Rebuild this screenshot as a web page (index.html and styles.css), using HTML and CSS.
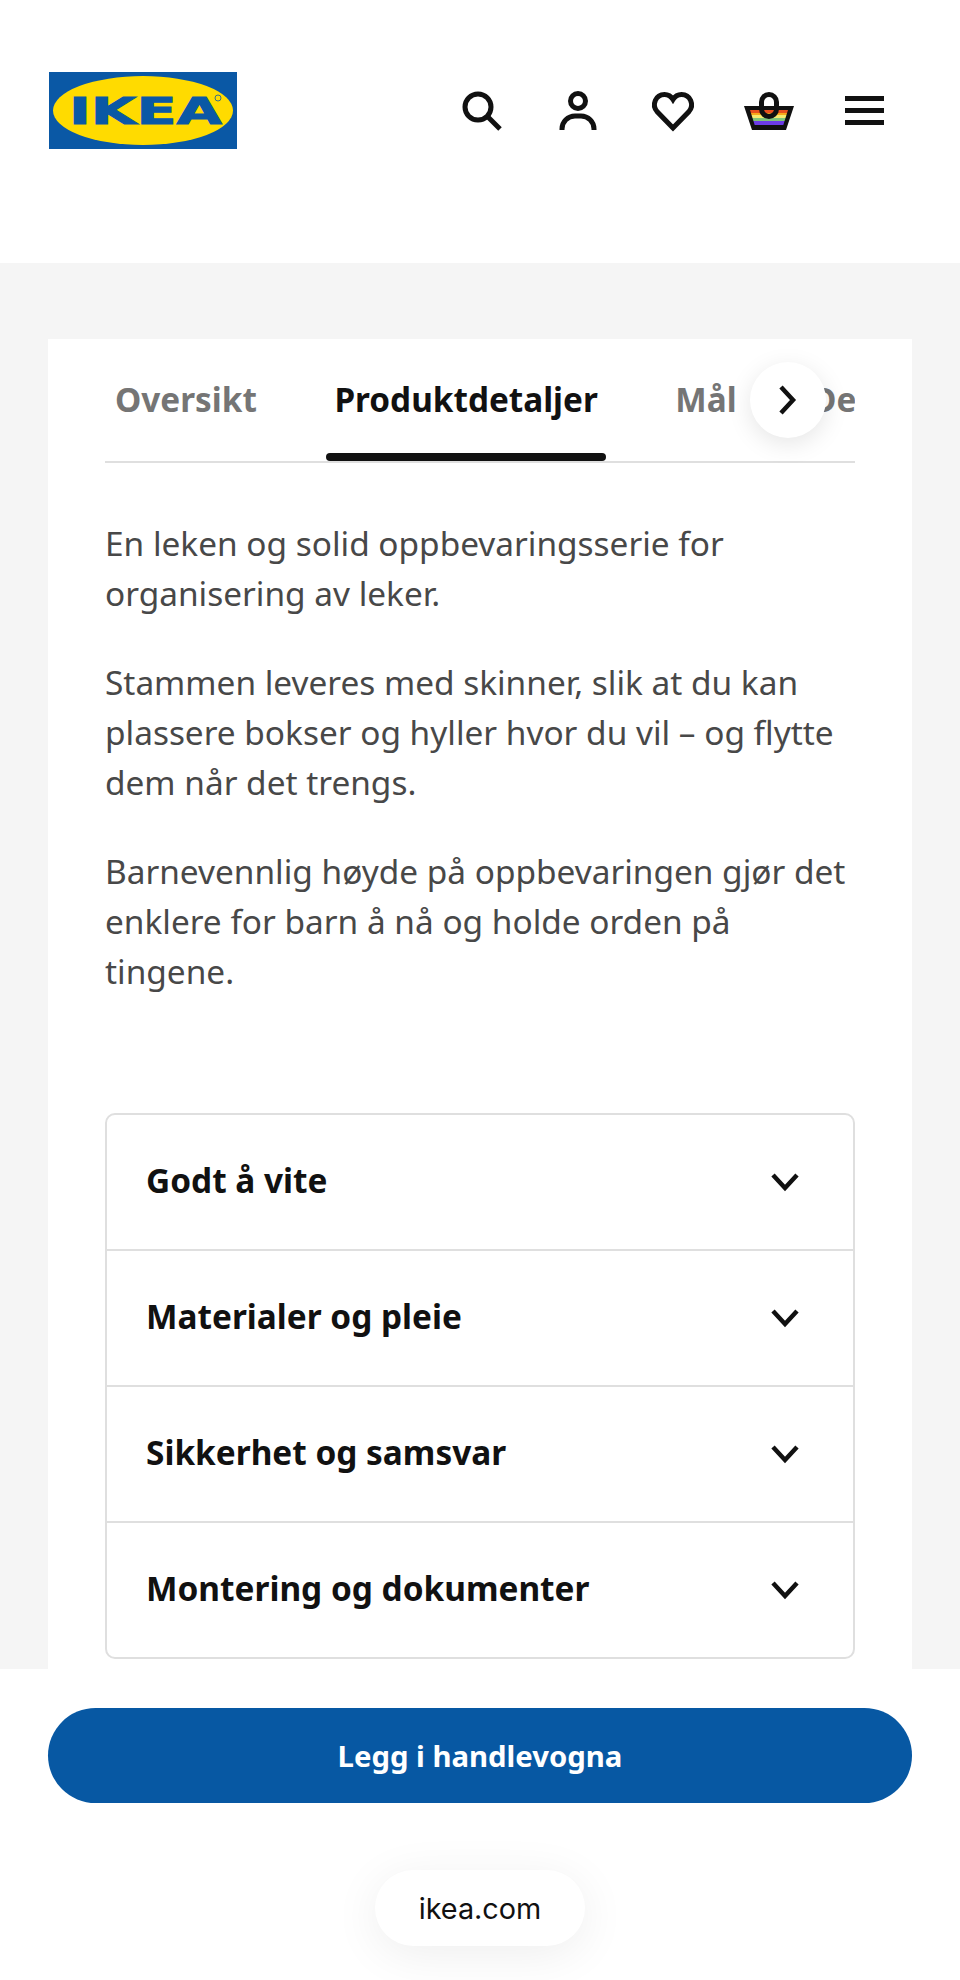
FILE: index.html
```html
<!DOCTYPE html>
<html lang="en">
<head>
    <meta charset="UTF-8">
    <meta name="viewport" content="width=device-width, initial-scale=1.0">
    <title>IKEA</title>
    <link rel="stylesheet" href="styles.css">
</head>
<body>
    <header class="site-header">
        <svg class="logo" viewBox="0 0 188 77" width="188" height="77">
            <rect width="188" height="77" fill="#0a58a5"/>
            <ellipse cx="94" cy="38.5" rx="90" ry="34.5" fill="#ffdb00"/>
            <text class="logo-text" x="20" y="52" textLength="153" lengthAdjust="spacingAndGlyphs">IKEA</text>
            <circle cx="169" cy="26" r="3" fill="none" stroke="#0a58a5" stroke-width="0.8"/>
        </svg>
        <nav class="icons">
            <span class="icon-btn">
                <svg viewBox="0 0 48 48" width="48" height="48" fill="none" stroke="#111" stroke-width="5">
                    <circle cx="20" cy="20" r="13"/>
                    <path d="M29.5 29.5L42 42"/>
                </svg>
            </span>
            <span class="icon-btn">
                <svg viewBox="0 0 48 48" width="48" height="48" fill="none" stroke="#111" stroke-width="5">
                    <circle cx="24" cy="14" r="7.5"/>
                    <path d="M8 43v-1a13 13 0 0 1 13-13h6a13 13 0 0 1 13 13v1"/>
                </svg>
            </span>
            <span class="icon-btn">
                <svg viewBox="0 0 48 48" width="48" height="48" fill="none" stroke="#111" stroke-width="5">
                    <path d="M24 41L8 24.500C2.500 18 6.500 7.500 15.500 7.500C20 7.500 22.500 10 24 12.500C25.500 10 28 7.500 32.500 7.500C41.500 7.500 45.500 18 40 24.500Z"/>
                </svg>
            </span>
            <span class="icon-btn">
                <svg class="basket" viewBox="0 0 48 48" width="48" height="48">
                    <defs>
                        <clipPath id="basket-inner"><path d="M5 23H43L38 39H10Z"/></clipPath>
                    </defs>
                    <path d="M-1 19H49L41 43H7Z" fill="#111"/>
                    <g clip-path="url(#basket-inner)">
                        <rect x="0" y="23" width="48" height="3" fill="#e8501e"/>
                        <rect x="0" y="26" width="48" height="2" fill="#f9a81a"/>
                        <rect x="0" y="28" width="48" height="3" fill="#f6ea6e"/>
                        <rect x="0" y="31" width="48" height="3" fill="#7fc47a"/>
                        <rect x="0" y="34" width="48" height="4" fill="#6c3ce8"/>
                    </g>
                    <rect x="16.500" y="7.500" width="15" height="22" rx="7.500" fill="none" stroke="#111" stroke-width="5"/>
                </svg>
            </span>
            <span class="icon-btn">
                <svg viewBox="0 0 48 48" width="48" height="48" fill="#111">
                    <rect x="5" y="9" width="39" height="5"/>
                    <rect x="5" y="21" width="39" height="5"/>
                    <rect x="5" y="33" width="39" height="5"/>
                </svg>
            </span>
        </nav>
    </header>

    <main class="content">
        <section class="card">
            <div class="tabs-wrap">
                <div class="tabs">
                    <span class="tab">Oversikt</span>
                    <span class="tab tab-active">Produktdetaljer</span>
                    <span class="tab">Mål</span>
                    <span class="tab tab-last">De</span>
                </div>
                <span class="tabs-next">
                    <svg viewBox="0 0 24 32" width="24" height="32" fill="none" stroke="#111" stroke-width="4.500">
                        <path d="M5 3L17 16L5 29"/>
                    </svg>
                </span>
            </div>

            <div class="description">
                <p>En leken og solid oppbevaringsserie for organisering av leker.</p>
                <p>Stammen leveres med skinner, slik at du kan plassere bokser og hyller hvor du vil – og flytte dem når det trengs.</p>
                <p>Barnevennlig høyde på oppbevaringen gjør det enklere for barn å nå og holde orden på tingene.</p>
            </div>

            <div class="accordion">
                <div class="accordion-row">
                    <span>Godt å vite</span>
                    <svg class="chevron" viewBox="0 0 32 20" width="32" height="20"><path d="M4 3L16 16L28 3"/></svg>
                </div>
                <div class="accordion-row">
                    <span>Materialer og pleie</span>
                    <svg class="chevron" viewBox="0 0 32 20" width="32" height="20"><path d="M4 3L16 16L28 3"/></svg>
                </div>
                <div class="accordion-row">
                    <span>Sikkerhet og samsvar</span>
                    <svg class="chevron" viewBox="0 0 32 20" width="32" height="20"><path d="M4 3L16 16L28 3"/></svg>
                </div>
                <div class="accordion-row">
                    <span>Montering og dokumenter</span>
                    <svg class="chevron" viewBox="0 0 32 20" width="32" height="20"><path d="M4 3L16 16L28 3"/></svg>
                </div>
            </div>
        </section>
    </main>

    <footer class="bottom-bar">
        <button class="buy-button">Legg i handlevogna</button>
        <div class="url-pill">ikea.com</div>
    </footer>
</body>
</html>
```

FILE: styles.css
```css
body {
    font-family: "Noto Sans", "Open Sans", sans-serif;
    background-color: #ffffff;
    color: #111111;
    margin: 0;
    height: 1980px;
    display: flex;
    flex-direction: column;
    overflow: hidden;
}

.site-header {
    height: 263px;
    box-sizing: border-box;
    padding: 72px 48px 0 49px;
    display: flex;
    justify-content: space-between;
    align-items: flex-start;
    flex-shrink: 0;
}

.logo {
    display: block;
}

.logo-text {
    font-family: "DejaVu Sans", sans-serif;
    font-weight: 700;
    font-size: 38px;
    fill: #0a58a5;
    stroke: #0a58a5;
    stroke-width: 1;
}

.icons {
    display: flex;
    height: 77px;
    align-items: center;
}

.icon-btn {
    width: 95.5px;
    display: flex;
    justify-content: center;
}

.basket {
    overflow: visible;
}

.content {
    flex: 1;
    min-height: 0;
    overflow: hidden;
    background-color: #f5f5f5;
    padding: 76px 48px 0;
}

.card {
    background-color: #ffffff;
    padding: 0 57px 40px;
}

.tabs-wrap {
    position: relative;
}

.tabs {
    height: 124px;
    box-sizing: border-box;
    padding-left: 2px;
    display: flex;
    gap: 61.5px;
    overflow: hidden;
    border-bottom: 2px solid #dfdfdf;
}

.tab {
    padding: 0 8px;
    font-size: 33.3px;
    font-weight: 700;
    line-height: 120px;
    color: #757575;
    white-space: nowrap;
    position: relative;
}

.tab-last {
    padding: 0;
    margin-left: 6px;
}

.tab-active {
    color: #111111;
}

.tab-active::after {
    content: "";
    position: absolute;
    left: 0;
    right: 0;
    bottom: 0;
    height: 8px;
    border-radius: 4px;
    background-color: #111111;
}

.tabs-next {
    position: absolute;
    left: 645px;
    top: 23px;
    width: 76px;
    height: 76px;
    border-radius: 50%;
    background-color: #ffffff;
    box-shadow: 0 6px 24px rgba(0, 0, 0, 0.1);
    display: flex;
    align-items: center;
    justify-content: center;
}

.description {
    padding-top: 55px;
    color: #484848;
    font-size: 33.4px;
    line-height: 50px;
}

.description p {
    margin: 0 0 39px;
}

.description p:last-child {
    margin-bottom: 0;
}

.accordion {
    margin-top: 117px;
    border: 2px solid #dfdfdf;
    border-radius: 10px;
}

.accordion-row {
    height: 134px;
    padding: 0 52px 0 39px;
    display: flex;
    align-items: center;
    justify-content: space-between;
    border-bottom: 2px solid #dfdfdf;
    font-size: 33.4px;
    font-weight: 700;
}

.accordion-row span {
    padding-bottom: 4px;
}

.accordion-row:last-child {
    border-bottom: none;
}

.chevron {
    fill: none;
    stroke: #111111;
    stroke-width: 4.5;
}

.bottom-bar {
    height: 311px;
    box-sizing: border-box;
    flex-shrink: 0;
    padding: 39px 48px 0;
    display: flex;
    flex-direction: column;
    align-items: center;
    background-color: #ffffff;
    position: relative;
}

.buy-button {
    width: 100%;
    height: 95px;
    border: none;
    border-radius: 48px;
    background-color: #0758a3;
    color: #ffffff;
    font-family: inherit;
    font-size: 29.3px;
    font-weight: 700;
}

.url-pill {
    margin-top: 67px;
    width: 210px;
    height: 76px;
    border-radius: 38px;
    background-color: #ffffff;
    box-shadow: 0 8px 48px rgba(0, 0, 0, 0.07);
    display: flex;
    align-items: center;
    justify-content: center;
    font-family: Inter, sans-serif;
    font-size: 28.8px;
}
```
